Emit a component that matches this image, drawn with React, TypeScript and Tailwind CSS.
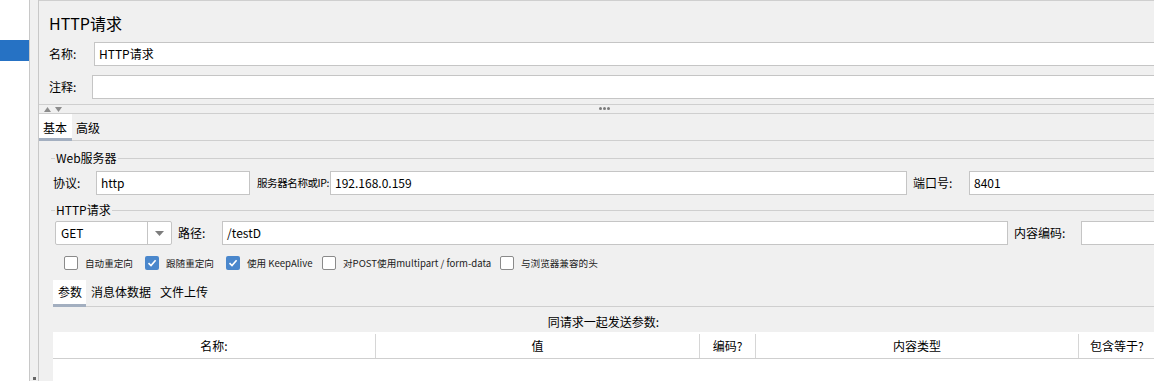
import React from 'react';

const line = 'bg-[#cfcfcf]';

function Field({ value = '', className = '' }: { value?: string; className?: string }) {
  return (
    <div
      className={`h-[24px] shrink-0 bg-white border border-[#c5c5c5] flex items-center pl-[4px] text-[12px] text-black ${className}`}
    >
      {value}
    </div>
  );
}

function GroupTitle({ title }: { title: string }) {
  return (
    <div className="flex items-center h-[18px] pl-[12px]">
      <div className={`w-[4px] h-px ${line}`} />
      <span className="px-[1px] text-[12px] text-black leading-[18px]">{title}</span>
      <div className={`flex-1 h-px ${line}`} />
    </div>
  );
}

function Check({ label, checked, width }: { label: string; checked?: boolean; width: string }) {
  return (
    <div className={`flex items-center shrink-0 ${width}`}>
      {checked ? (
        <div className="w-[14px] h-[14px] rounded-[2px] bg-[#4a87cc] flex items-center justify-center">
          <svg width="10" height="10" viewBox="0 0 10 10">
            <path d="M1.5 5.2 L4 7.6 L8.6 2.2" stroke="white" strokeWidth="1.6" fill="none" />
          </svg>
        </div>
      ) : (
        <div className="w-[14px] h-[14px] rounded-[2px] bg-white border border-[#8a8a8a]" />
      )}
      <span className="ml-[7px] text-[9.6px] text-[#222] leading-[14px] whitespace-nowrap">{label}</span>
    </div>
  );
}

export default function App() {
  return (
    <div className="flex w-[1154px] h-[381px] overflow-hidden bg-[#f0f0f0] font-['Microsoft_YaHei','Noto_Sans_CJK_SC',sans-serif] text-black text-[12px]">
      {/* tree */}
      <aside className="w-[30px] shrink-0 bg-white border-r border-[#c8c8c8]">
        <div className="mt-[40px] h-[21px] bg-[#2672c4]" />
      </aside>
      {/* splitter strip */}
      <div className="w-[9px] shrink-0 border-r border-[#c8c8c8] flex flex-col justify-end items-start pl-[3px]">
        <div className="w-[3px] h-[3px] bg-[#666] mb-[1px]" />
      </div>

      <main className="flex-1 min-w-0 overflow-hidden border-t border-[#cfcfcf]">
        <div className="h-[41px] pl-[10px] pt-[12px]">
          <h1 className="text-[16px] leading-[20px] font-normal">HTTP请求</h1>
        </div>

        <div className="flex items-center">
          <span className="pl-[10px] w-[55px] shrink-0">名称:</span>
          <Field value="HTTP请求" className="w-[1080px]" />
        </div>
        <div className="flex items-center mt-[9px]">
          <span className="pl-[10px] w-[53px] shrink-0">注释:</span>
          <Field className="w-[1080px]" />
        </div>

        {/* splitter */}
        <div className="mt-[5px] h-[10px] border-y border-[#cfcfcf] flex items-center relative">
          <div className="flex items-center gap-[4px] pl-[5px]">
            <svg width="7" height="5" viewBox="0 0 7 5">
              <path d="M0 5 L3.5 0 L7 5 Z" fill="#8c8c8c" />
            </svg>
            <svg width="7" height="5" viewBox="0 0 7 5">
              <path d="M0 0 L7 0 L3.5 5 Z" fill="#8c8c8c" />
            </svg>
          </div>
          <div className="absolute left-[560px] top-[2px] flex gap-[1px]">
            <div className="w-[3px] h-[3px] rounded-full bg-[#7a7a7a]" />
            <div className="w-[3px] h-[3px] rounded-full bg-[#7a7a7a]" />
            <div className="w-[3px] h-[3px] rounded-full bg-[#7a7a7a]" />
          </div>
        </div>

        {/* tabs */}
        <div className="h-[27px] border-b border-[#cfcfcf] flex items-start">
          <div className="h-[27px] w-[33px] bg-white border-b-[3px] border-[#a3afc0] pl-[4px] pt-[2px] leading-[24px] whitespace-nowrap">
            基本
          </div>
          <div className="pl-[4px] pt-[2px] leading-[24px]">高级</div>
        </div>

        <div className="mt-[8px]">
          <GroupTitle title="Web服务器" />
        </div>
        <div className="flex items-center mt-[4px] pl-[14px]">
          <span className="w-[43px] shrink-0">协议:</span>
          <Field value="http" className="w-[154px]" />
          <span className="ml-[7px] w-[73px] shrink-0 whitespace-nowrap [font-size:10.5px] tracking-[-0.4px]">服务器名称或IP:</span>
          <Field value="192.168.0.159" className="w-[577px]" />
          <span className="ml-[6px] w-[56px] shrink-0">端口号:</span>
          <Field value="8401" className="w-[200px]" />
        </div>

        <div className="mt-[6px]">
          <GroupTitle title="HTTP请求" />
        </div>
        <div className="flex items-center mt-[2px] pl-[16px]">
          <div className="w-[117px] h-[24px] shrink-0 bg-white border border-[#c5c5c5] rounded-[2px] flex items-center">
            <span className="w-[92px] pl-[5px] border-r border-[#c5c5c5] h-full flex items-center">GET</span>
            <div className="flex-1 flex justify-center">
              <svg width="9" height="5" viewBox="0 0 9 5">
                <path d="M0 0 L9 0 L4.5 5 Z" fill="#7d7d7d" />
              </svg>
            </div>
          </div>
          <span className="ml-[6px] w-[44px] shrink-0">路径:</span>
          <Field value="/testD" className="w-[786px]" />
          <span className="ml-[6px] w-[67px] shrink-0">内容编码:</span>
          <Field className="w-[100px]" />
        </div>

        <div className="flex items-center mt-[11px] pl-[25px] h-[14px]">
          <Check label="自动重定向" width="w-[81px]" />
          <Check label="跟随重定向" checked width="w-[81px]" />
          <Check label="使用 KeepAlive" checked width="w-[96px]" />
          <Check label="对POST使用multipart / form-data" width="w-[178px]" />
          <Check label="与浏览器兼容的头" width="w-[140px]" />
        </div>

        {/* sampler tabs */}
        <div className="ml-[14px] mt-[10px] h-[27px] border-b border-[#cfcfcf] flex items-start">
          <div className="h-[27px] w-[33px] bg-white border-b-[3px] border-[#a3afc0] pl-[5px] leading-[24px] whitespace-nowrap">参数</div>
          <div className="pl-[5px] leading-[24px]">消息体数据</div>
          <div className="pl-[9px] leading-[24px]">文件上传</div>
        </div>

        <div className="ml-[14px] h-[25px] flex items-center justify-center pt-[4px]">
          <span>同请求一起发送参数:</span>
        </div>

        <div className="ml-[14px] w-[1120px] bg-white h-[60px]">
          <div className="flex h-[27px] border-b border-[#cfcfcf] pt-[2px]">
            <div className="w-[323px] border-r border-[#d6d6d6] flex items-center justify-center">名称:</div>
            <div className="w-[324px] border-r border-[#d6d6d6] flex items-center justify-center">值</div>
            <div className="w-[56px] border-r border-[#d6d6d6] flex items-center justify-center">编码?</div>
            <div className="w-[323px] border-r border-[#d6d6d6] flex items-center justify-center">内容类型</div>
            <div className="w-[80px] flex items-center pl-[11px]">包含等于?</div>
          </div>
        </div>
      </main>
    </div>
  );
}
